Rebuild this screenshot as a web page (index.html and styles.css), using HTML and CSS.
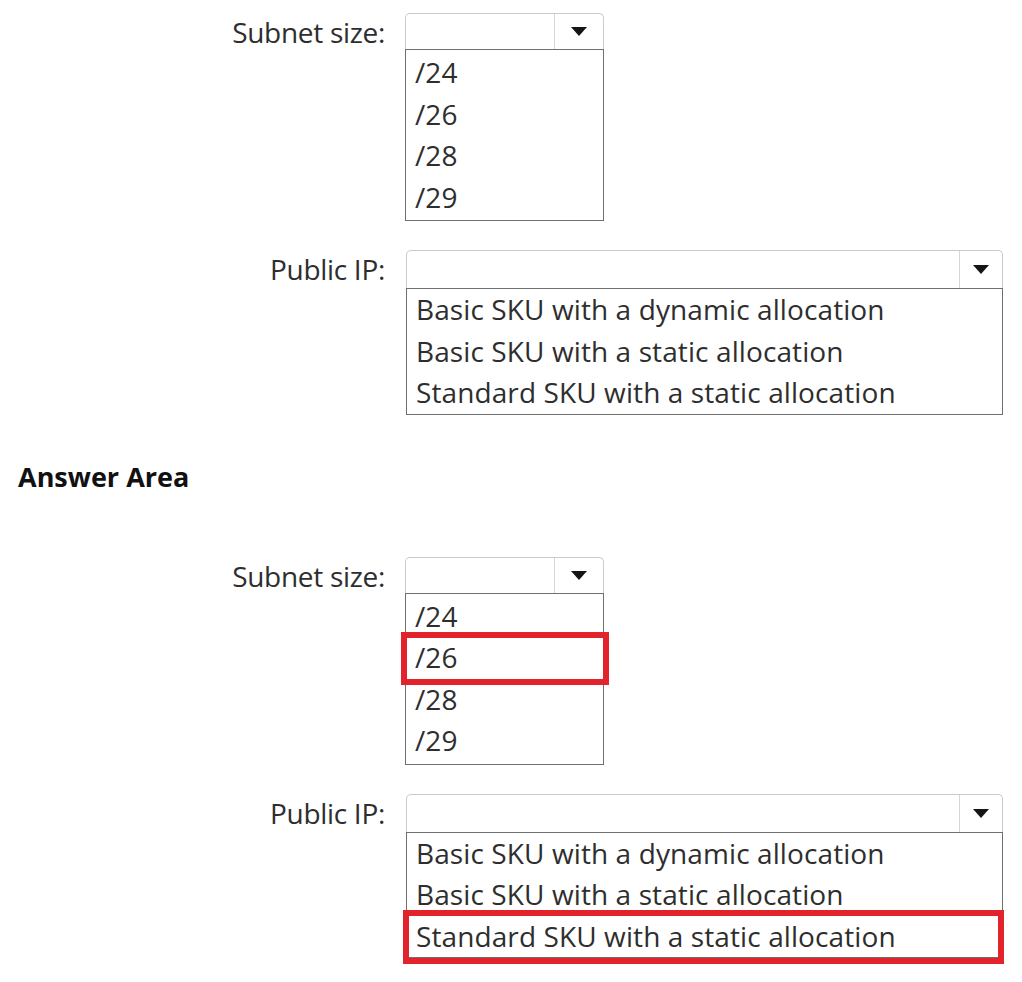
FILE: index.html
```html
<!DOCTYPE html>
<html>
    <head>
        <title>Answer Area</title>
        <link rel="stylesheet" href="styles.css">
    </head>

    <body>
        <div class="page">

            <section class="block">
                <div class="field">
                    <span class="label">Subnet size:</span>
                    <div class="dropdown subnet">
                        <div class="select">
                            <span class="select-value"></span>
                            <span class="select-button"><span class="arrow"></span></span>
                        </div>
                        <ul class="options">
                            <li>/24</li>
                            <li>/26</li>
                            <li>/28</li>
                            <li>/29</li>
                        </ul>
                    </div>
                </div>

                <div class="field">
                    <span class="label">Public IP:</span>
                    <div class="dropdown public-ip">
                        <div class="select">
                            <span class="select-value"></span>
                            <span class="select-button"><span class="arrow"></span></span>
                        </div>
                        <ul class="options">
                            <li>Basic SKU with a dynamic allocation</li>
                            <li>Basic SKU with a static allocation</li>
                            <li>Standard SKU with a static allocation</li>
                        </ul>
                    </div>
                </div>
            </section>

            <h2 class="answer-title">Answer Area</h2>

            <section class="block">
                <div class="field">
                    <span class="label">Subnet size:</span>
                    <div class="dropdown subnet">
                        <div class="select">
                            <span class="select-value"></span>
                            <span class="select-button"><span class="arrow"></span></span>
                        </div>
                        <ul class="options">
                            <li>/24</li>
                            <li class="picked">/26</li>
                            <li>/28</li>
                            <li>/29</li>
                        </ul>
                    </div>
                </div>

                <div class="field">
                    <span class="label">Public IP:</span>
                    <div class="dropdown public-ip">
                        <div class="select">
                            <span class="select-value"></span>
                            <span class="select-button"><span class="arrow"></span></span>
                        </div>
                        <ul class="options">
                            <li>Basic SKU with a dynamic allocation</li>
                            <li>Basic SKU with a static allocation</li>
                            <li class="picked picked-low">Standard SKU with a static allocation</li>
                        </ul>
                    </div>
                </div>
            </section>

        </div>
    </body>
</html>
```

FILE: styles.css
```css
body {
    margin: 0;
    background-color: white;
    color: #2e2e2e;
    font-family: "Open Sans", "Noto Sans", sans-serif;
}

.page {
    padding-top: 13px;
    padding-bottom: 20px;
}

.block {
    display: flex;
    flex-direction: column;
    gap: 29px;
}

.field {
    display: grid;
    grid-template-columns: 385px auto;
    column-gap: 20px;
    align-items: start;
}

.label {
    height: 36px;
    line-height: 38px;
    text-align: right;
    font-size: 28px;
    letter-spacing: -0.3px;
}

.dropdown.subnet {
    width: 199px;
}
.dropdown.public-ip {
    width: 597px;
    margin-left: 1px;
}

.select {
    display: flex;
    height: 35px;
    border: 1px solid #cacaca;
    border-bottom: none;
    border-radius: 5px 5px 0 0;
}
.public-ip .select {
    height: 37px;
}
.select-value {
    flex: 1;
}
.select-button {
    width: 48px;
    display: flex;
    align-items: center;
    justify-content: center;
    border-left: 1px solid #d6d6d6;
}
.public-ip .select-button {
    width: 42px;
}
.arrow {
    width: 0;
    height: 0;
    border-left: 8px solid transparent;
    border-right: 8px solid transparent;
    border-top: 9px solid #151515;
}

.options {
    list-style: none;
    margin: 0;
    padding: 2px 0 2px 0;
    border: 1px solid #6f6f6f;
}
.public-ip .options {
    padding: 0;
}
.options li {
    position: relative;
    height: 41.5px;
    line-height: 41.5px;
    padding-left: 9px;
    font-size: 28px;
    letter-spacing: 0.1px;
    white-space: nowrap;
}

.picked::after {
    content: "";
    position: absolute;
    top: -5px;
    bottom: -6px;
    left: -5px;
    right: -6px;
    border: 6px solid #e3232b;
}
.picked-low::after {
    top: -6px;
    bottom: -7px;
    left: -4px;
    right: -2px;
}

.answer-title {
    margin: 47px 0 65px 18px;
    height: 30px;
    line-height: 30px;
    font-size: 27px;
    font-weight: bold;
    color: #111;
}
```
